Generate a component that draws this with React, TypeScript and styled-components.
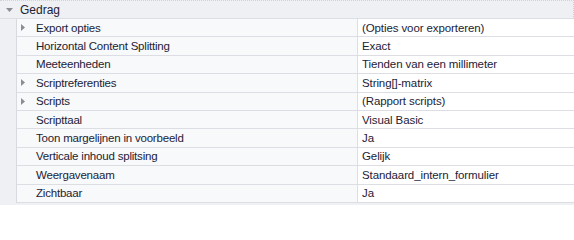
import styled, { createGlobalStyle } from "styled-components";

const GlobalStyle = createGlobalStyle`
  html, body {
    margin: 0;
    padding: 0;
    background: #ffffff;
  }
  body {
    font-family: "Liberation Sans", Arial, sans-serif;
  }
`;

export const Grid = styled.div`
  width: 574px;
  height: 205px;
  overflow: hidden;
  background-color: #eef0f3;
  font-size: 11.5px;
  color: #1d2235;
`;

export const Category = styled.div`
  height: 19px;
  display: flex;
  align-items: center;
  box-sizing: border-box;
  border-top: 1px dotted #cfd2d8;
  border-right: 1px dotted #cfd2d8;
  border-bottom: 1px solid #dcdee3;
`;

const Toggle = styled.span`
  width: 16px;
  display: flex;
  justify-content: center;
  padding-left: 1px;
`;

const CategoryTitle = styled.span`
  padding-left: 3px;
  font-size: 12px;
`;

const Body = styled.div`
  display: flex;
`;

const Gutter = styled.div`
  width: 16px;
  flex: none;
  border-right: 1px solid #d8dae0;
`;

const Rows = styled.div`
  flex: 1;
  display: flex;
  flex-direction: column;
`;

export const Row = styled.div`
  height: 18.4px;
  box-sizing: border-box;
  display: grid;
  grid-template-columns: 341px 1fr;
  border-bottom: 1px solid #dcdee3;
`;

const NameCell = styled.div`
  display: flex;
  align-items: center;
  background-color: #f8f9fa;
  border-right: 1px solid #dcdee3;
  white-space: nowrap;
  letter-spacing: -0.2px;
`;

const Expander = styled.span`
  width: 19px;
  flex: none;
  display: flex;
  justify-content: flex-start;
  padding-left: 4px;
  box-sizing: border-box;
`;

const ValueCell = styled.div`
  display: flex;
  align-items: center;
  padding-left: 4px;
  background-color: #ffffff;
  white-space: nowrap;
  letter-spacing: -0.1px;
`;

interface IArrowProps {
  dir: "down" | "right";
}

function Arrow({ dir }: IArrowProps) {
  return dir === "down" ? (
    <svg width="7" height="4" viewBox="0 0 7 4">
      <path d="M0 0 H7 L3.5 4 Z" fill="#8a8d94" />
    </svg>
  ) : (
    <svg width="4" height="7" viewBox="0 0 4 7">
      <path d="M0 0 V7 L4 3.5 Z" fill="#8a8d94" />
    </svg>
  );
}

interface IProp {
  name: string;
  value: string;
  expandable?: boolean;
}

const props: IProp[] = [
  { name: "Export opties", value: "(Opties voor exporteren)", expandable: true },
  { name: "Horizontal Content Splitting", value: "Exact" },
  { name: "Meeteenheden", value: "Tienden van een millimeter" },
  { name: "Scriptreferenties", value: "String[]-matrix", expandable: true },
  { name: "Scripts", value: "(Rapport scripts)", expandable: true },
  { name: "Scripttaal", value: "Visual Basic" },
  { name: "Toon margelijnen in voorbeeld", value: "Ja" },
  { name: "Verticale inhoud splitsing", value: "Gelijk" },
  { name: "Weergavenaam", value: "Standaard_intern_formulier" },
  { name: "Zichtbaar", value: "Ja" },
];

export default function App() {
  return (
    <>
      <GlobalStyle />
      <Grid>
        <Category>
          <Toggle>
            <Arrow dir="down" />
          </Toggle>
          <CategoryTitle>Gedrag</CategoryTitle>
        </Category>
        <Body>
          <Gutter />
          <Rows>
            {props.map((p) => (
              <Row key={p.name}>
                <NameCell>
                  <Expander>{p.expandable && <Arrow dir="right" />}</Expander>
                  {p.name}
                </NameCell>
                <ValueCell>{p.value}</ValueCell>
              </Row>
            ))}
          </Rows>
        </Body>
      </Grid>
    </>
  );
}
